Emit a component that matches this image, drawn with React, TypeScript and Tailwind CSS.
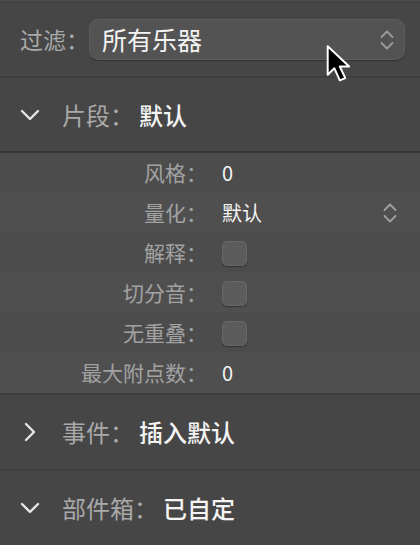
import React from "react";

const font = { fontFamily: '"Noto Sans CJK SC", "Noto Sans", sans-serif' };

function Stepper({ className = "" }: { className?: string }) {
  return (
    <svg width="16" height="26" viewBox="0 0 16 26" className={className}>
      <path d="M2.5 10 L8 4.5 L13.5 10" fill="none" stroke="currentColor" strokeWidth="1.8" strokeLinecap="round" strokeLinejoin="round" />
      <path d="M2.5 16 L8 21.5 L13.5 16" fill="none" stroke="currentColor" strokeWidth="1.8" strokeLinecap="round" strokeLinejoin="round" />
    </svg>
  );
}

function Chevron({ open }: { open: boolean }) {
  return (
    <svg width="22" height="22" viewBox="0 0 22 22" className="text-[#e6e6e6]">
      {open ? (
        <path d="M3 7 L11 15 L19 7" fill="none" stroke="currentColor" strokeWidth="2.4" strokeLinecap="round" strokeLinejoin="round" />
      ) : (
        <path d="M7 3 L15 11 L7 19" fill="none" stroke="currentColor" strokeWidth="2.4" strokeLinecap="round" strokeLinejoin="round" />
      )}
    </svg>
  );
}

function Header({ open, label, value, h }: { open: boolean; label: string; value: string; h: string }) {
  return (
    <div className={`flex items-center pl-[19px] ${h}`}>
      <Chevron open={open} />
      <span className="ml-[21px] text-[24px] text-[#a9a9a9]">{label}：</span>
      <span className="ml-[5px] text-[24px] text-[#f4f4f4] font-medium">{value}</span>
    </div>
  );
}

function Row({ label, children, shade }: { label: string; children?: React.ReactNode; shade: boolean }) {
  return (
    <div className={`flex items-center h-[40px] ${shade ? "bg-[#4f4f4f]" : "bg-[#4c4c4c]"}`}>
      <div className="w-[207px] text-right text-[21px] text-[#a2a2a2]">{label}：</div>
      <div className="ml-[15px] flex-1 flex items-center text-[20px] text-[#f4f4f4]">{children}</div>
    </div>
  );
}

function Check() {
  return <div className="w-[25px] h-[25px] rounded-[5px] bg-[#5c5c5c] border border-[#686868] shadow-[0_1px_1px_rgba(0,0,0,0.35)]" />;
}

export default function App() {
  return (
    <div style={font} className="relative w-[420px] h-[545px] bg-[#464646] overflow-hidden select-none">
      <div className="h-[3px] bg-[#4a4a4a] border-b border-[#3c3c3c]" />
      <div className="h-[75px] flex items-center pl-[20px] pr-[15px] border-b-2 border-[#3d3d3d]">
        <span className="w-[69px] text-[23px] text-[#a9a9a9]">过滤：</span>
        <div className="flex-1 h-[41px] rounded-[9px] bg-[#535353] border border-[#5d5d5d] shadow-[0_1px_1px_rgba(0,0,0,0.3)] flex items-center pl-[12px] pr-[9px]">
          <span className="flex-1 text-[25px] text-[#f4f4f4]">所有乐器</span>
          <Stepper className="text-[#9a9a9a]" />
        </div>
      </div>
      <Header open label="片段" value="默认" h="h-[75px] border-b-2 border-[#363636]" />
      <div className="flex flex-col">
        <Row label="风格" shade={false}>0</Row>
        <Row label="量化" shade>
          <span className="flex-1">默认</span>
          <Stepper className="text-[#a0a0a0] mr-[22px]" />
        </Row>
        <Row label="解释" shade={false}><Check /></Row>
        <Row label="切分音" shade><Check /></Row>
        <Row label="无重叠" shade={false}><Check /></Row>
        <Row label="最大附点数" shade>0</Row>
      </div>
      <div className="border-t-2 border-[#3e3e3e]" />
      <Header open={false} label="事件" value="插入默认" h="h-[75px] border-b border-[#3e3e3e]" />
      <Header open label="部件箱" value="已自定" h="h-[75px]" />
      <svg className="absolute left-[325px] top-[44px]" width="34" height="44" viewBox="0 0 30 40">
        <path d="M2 2 L2 28 L8 22 L13 33 L18 31 L13 20.5 L21.5 20.5 Z" fill="#000" stroke="#fff" strokeWidth="1.8" strokeLinejoin="round" />
      </svg>
    </div>
  );
}
